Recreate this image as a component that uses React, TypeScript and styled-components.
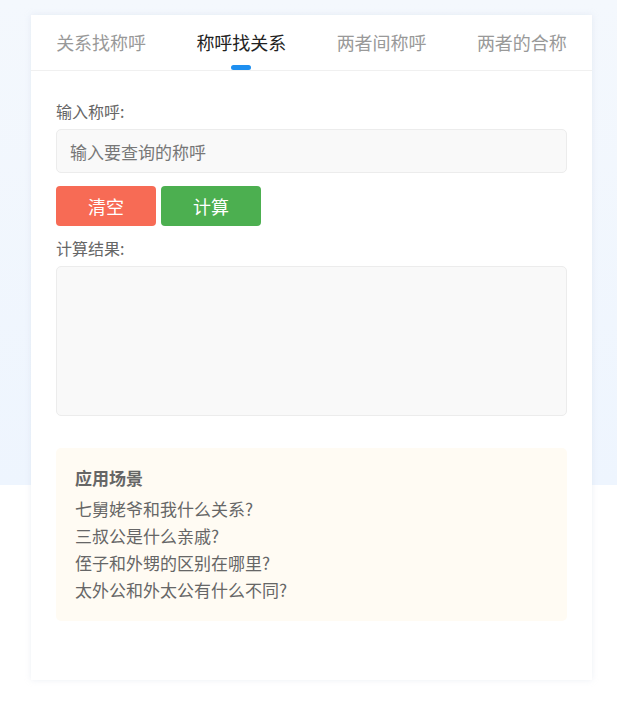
import React, { useState } from "react";
import styled, { createGlobalStyle } from "styled-components";

const GlobalStyle = createGlobalStyle`
  html, body {
    margin: 0;
    padding: 0;
    background: #fff;
    font-family: "Noto Sans CJK SC", "Noto Sans", sans-serif;
  }
  * { box-sizing: border-box; }
`;

const Page = styled.div`
  min-height: 712px;
  padding: 15px 25px 32px 31px;
  background: linear-gradient(180deg, #f4f8fd 0px, #eef5fe 485px, #fff 485px);
`;

const Card = styled.div`
  width: 561px;
  background: #fff;
  box-shadow: 0 0 6px rgba(200, 210, 225, 0.35);
  padding-bottom: 59px;
`;

const Tabs = styled.div`
  display: flex;
  height: 56px;
  border-bottom: 1px solid #f0f0f0;
`;

const Tab = styled.div<{ $active?: boolean }>`
  flex: 1;
  position: relative;
  display: flex;
  justify-content: center;
  padding-top: 13px;
  font-size: 18px;
  line-height: 28px;
  color: ${p => (p.$active ? "#222" : "#999")};
  cursor: pointer;
  &::after {
    content: "";
    display: ${p => (p.$active ? "block" : "none")};
    position: absolute;
    left: 50%;
    bottom: 0;
    width: 20px;
    height: 5px;
    margin-left: -10px;
    border-radius: 3px;
    background: #1e8ff0;
  }
`;

const Body = styled.div`
  padding: 28px 25px 0;
`;

const Label = styled.div`
  font-size: 16px;
  line-height: 24px;
  color: #666;
  margin-bottom: 6px;
`;

const Input = styled.input`
  display: block;
  width: 100%;
  height: 44px;
  padding: 0 13px;
  background: #f9f9f9;
  border: 1px solid #ececec;
  border-radius: 5px;
  font-family: inherit;
  font-size: 17px;
  color: #333;
  outline: none;
  &::placeholder { color: #777; }
`;

const Buttons = styled.div`
  display: flex;
  gap: 5px;
  margin: 13px 0 10px;
`;

const Button = styled.button<{ $color: string }>`
  width: 100px;
  height: 40px;
  border: none;
  border-radius: 4px;
  background: ${p => p.$color};
  color: #fff;
  font-family: inherit;
  font-size: 18px;
  cursor: pointer;
`;

const Result = styled.div`
  height: 150px;
  background: #f9f9f9;
  border: 1px solid #ececec;
  border-radius: 5px;
`;

const Scene = styled.div`
  margin-top: 32px;
  padding: 16px 19px 18px;
  background: #fffbf3;
  border-radius: 5px;
  color: #666;
`;

const SceneTitle = styled.div`
  font-size: 17px;
  font-weight: 700;
  line-height: 27px;
  margin-bottom: 4px;
`;

const SceneLine = styled.div`
  font-size: 17px;
  line-height: 27px;
`;

const tabs = ["关系找称呼", "称呼找关系", "两者间称呼", "两者的合称"];
const scenes = [
  "七舅姥爷和我什么关系?",
  "三叔公是什么亲戚?",
  "侄子和外甥的区别在哪里?",
  "太外公和外太公有什么不同?",
];

export default function App() {
  const [active, setActive] = useState(1);
  const [value, setValue] = useState("");
  return (
    <>
      <GlobalStyle />
      <Page>
        <Card>
          <Tabs>
            {tabs.map((t, i) => (
              <Tab key={t} $active={i === active} onClick={() => setActive(i)}>
                {t}
              </Tab>
            ))}
          </Tabs>
          <Body>
            <Label>输入称呼:</Label>
            <Input
              placeholder="输入要查询的称呼"
              value={value}
              onChange={e => setValue(e.target.value)}
            />
            <Buttons>
              <Button $color="#f76b55" onClick={() => setValue("")}>清空</Button>
              <Button $color="#4caf50">计算</Button>
            </Buttons>
            <Label>计算结果:</Label>
            <Result />
            <Scene>
              <SceneTitle>应用场景</SceneTitle>
              {scenes.map(s => (
                <SceneLine key={s}>{s}</SceneLine>
              ))}
            </Scene>
          </Body>
        </Card>
      </Page>
    </>
  );
}
